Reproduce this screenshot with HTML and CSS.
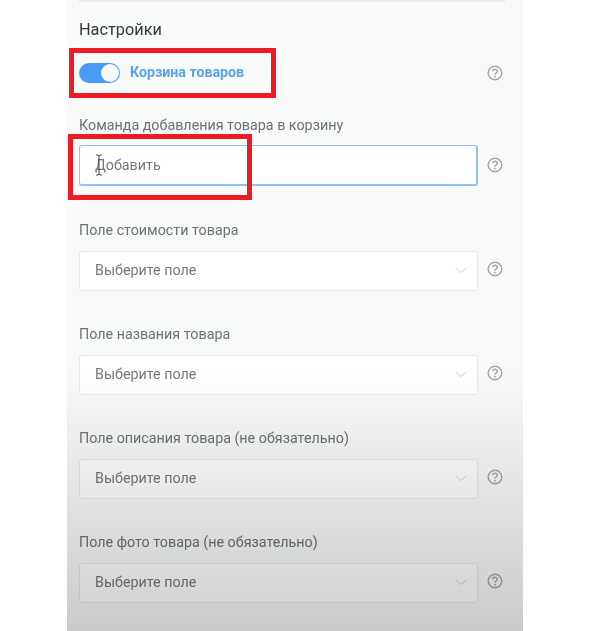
FILE: index.html
```html
<!DOCTYPE html>
<html>
    <head>
        <title>Настройки</title>
        <link rel="stylesheet" href="styles.css">
    </head>
    <body>
        <div class="panel">
            <div class="topline"></div>
            <h4 class="title">Настройки</h4>
            <div class="toggle-row">
                <span class="toggle"><span class="knob"></span></span>
                <span class="toggle-label">Корзина товаров</span>
                <svg class="help" viewBox="0 0 16 16"><use href="#q"/></svg>
            </div>

            <div class="group group-first">
                <div class="label">Команда добавления товара в корзину</div>
                <div class="row">
                    <div class="control active">Добавить</div>
                    <svg class="help" viewBox="0 0 16 16"><use href="#q"/></svg>
                </div>
            </div>
            <div class="group">
                <div class="label">Поле стоимости товара</div>
                <div class="row">
                    <div class="control">Выберите поле<svg class="arrow" viewBox="0 0 12 6"><path d="M.5 .5l5.500 5 5.500-5"/></svg></div>
                    <svg class="help" viewBox="0 0 16 16"><use href="#q"/></svg>
                </div>
            </div>
            <div class="group">
                <div class="label">Поле названия товара</div>
                <div class="row">
                    <div class="control">Выберите поле<svg class="arrow" viewBox="0 0 12 6"><path d="M.5 .5l5.500 5 5.500-5"/></svg></div>
                    <svg class="help" viewBox="0 0 16 16"><use href="#q"/></svg>
                </div>
            </div>
            <div class="group">
                <div class="label">Поле описания товара (не обязательно)</div>
                <div class="row">
                    <div class="control">Выберите поле<svg class="arrow" viewBox="0 0 12 6"><path d="M.5 .5l5.500 5 5.500-5"/></svg></div>
                    <svg class="help" viewBox="0 0 16 16"><use href="#q"/></svg>
                </div>
            </div>
            <div class="group">
                <div class="label">Поле фото товара (не обязательно)</div>
                <div class="row">
                    <div class="control">Выберите поле<svg class="arrow" viewBox="0 0 12 6"><path d="M.5 .5l5.500 5 5.500-5"/></svg></div>
                    <svg class="help" viewBox="0 0 16 16"><use href="#q"/></svg>
                </div>
            </div>
        </div>

        <!-- затемнение снизу и пометки поверх скриншота -->
        <div class="shade"></div>
        <div class="mark mark-toggle"></div>
        <div class="mark mark-input"></div>
        <svg class="cursor" viewBox="0 0 8 22"><path d="M1 1h2l1 1 1-1h2M4 2v18M1 21h2l1-1 1 1h2"/></svg>

        <svg class="defs" width="0" height="0">
            <symbol id="q" viewBox="0 0 16 16">
                <circle cx="8" cy="8" r="6.800" fill="none" stroke="currentColor" stroke-width="1.500"/>
                <path d="M5.800 6.300c0-1.300 1-2.100 2.200-2.100s2.200.8 2.200 2c0 1.900-2.200 1.800-2.200 3.600" fill="none" stroke="currentColor" stroke-width="1.500"/>
                <circle cx="8" cy="11.700" r=".95" fill="currentColor"/>
            </symbol>
        </svg>
    </body>
</html>
```

FILE: styles.css
```css
html, body {
  margin: 0;
  padding: 0;
  height: 631px;
  overflow: hidden;
  background-color: #fff;
}
body {
  position: relative;
  font-family: Roboto, "Liberation Sans", sans-serif;
}
.panel {
  margin-left: 67px;
  width: 456px;
  height: 631px;
  box-sizing: border-box;
  padding-left: 12px;
  background-color: #f8f9f9;
  overflow: hidden;
  filter: blur(0.4px);
}
.topline {
  width: 426px;
  height: 2px;
  background-color: #e9eaeb;
}
.title {
  margin: 18px 0 0 0;
  height: 20px;
  line-height: 20px;
  font-size: 16.300px;
  font-weight: 400;
  color: #33383d;
}
.toggle-row {
  display: flex;
  align-items: center;
  margin-top: 22px;
  height: 22px;
  width: 424px;
}
.toggle {
  display: block;
  position: relative;
  width: 41px;
  height: 20px;
  border-radius: 10px;
  background-color: #4a9bf5;
}
.knob {
  position: absolute;
  right: 1px;
  top: 1px;
  width: 18px;
  height: 18px;
  border-radius: 50%;
  background-color: #f7f9fb;
}
.toggle-label {
  margin-left: 10px;
  margin-bottom: 2px;
  flex: 1;
  font-size: 14.200px;
  font-weight: 700;
  color: #57a3f2;
}
.help {
  width: 16px;
  height: 16px;
  color: #a9a9a9;
  flex: none;
}
.group {
  height: 104px;
}
.group-first {
  margin-top: 30px;
  height: 105px;
}
.group-first .row {
  margin-top: 11px;
}
.label {
  height: 20px;
  line-height: 22px;
  font-size: 14.300px;
  color: #6d7175;
}
.row {
  display: flex;
  align-items: center;
  gap: 9px;
  margin-top: 12px;
  width: 424px;
}
.row .help {
  margin-bottom: 4px;
}
.group-first .row .help {
  margin-bottom: 2px;
}
.control {
  display: flex;
  align-items: center;
  justify-content: space-between;
  box-sizing: border-box;
  width: 399px;
  height: 40px;
  padding: 0 10px 2px 15px;
  background-color: #fff;
  border: 1px solid #e8e9ea;
  border-radius: 3px;
  font-size: 14.300px;
  color: #75797d;
}
.control.active {
  height: 41px;
  padding-bottom: 0;
  border: 1px solid #8fc2f2;
  border-bottom-width: 2px;
  border-right-width: 2px;
}
.arrow {
  width: 12px;
  height: 6px;
  fill: none;
  stroke: #cfd1d3;
  stroke-width: 1;
}
.shade {
  position: absolute;
  left: 67px;
  top: 370px;
  width: 456px;
  height: 261px;
  background: linear-gradient(to bottom, rgba(0, 0, 0, 0), rgba(0, 0, 0, 0.19));
}
.mark {
  position: absolute;
  box-sizing: border-box;
  border: 5px solid #ed1c24;
}
.mark-toggle {
  left: 69px;
  top: 48px;
  width: 207px;
  height: 50px;
}
.mark-input {
  left: 68px;
  top: 134px;
  width: 184px;
  height: 66px;
}
.cursor {
  position: absolute;
  left: 95px;
  top: 154px;
  width: 8px;
  height: 22px;
  fill: none;
  stroke: #444;
  stroke-width: 1;
}
.defs {
  position: absolute;
}
```
